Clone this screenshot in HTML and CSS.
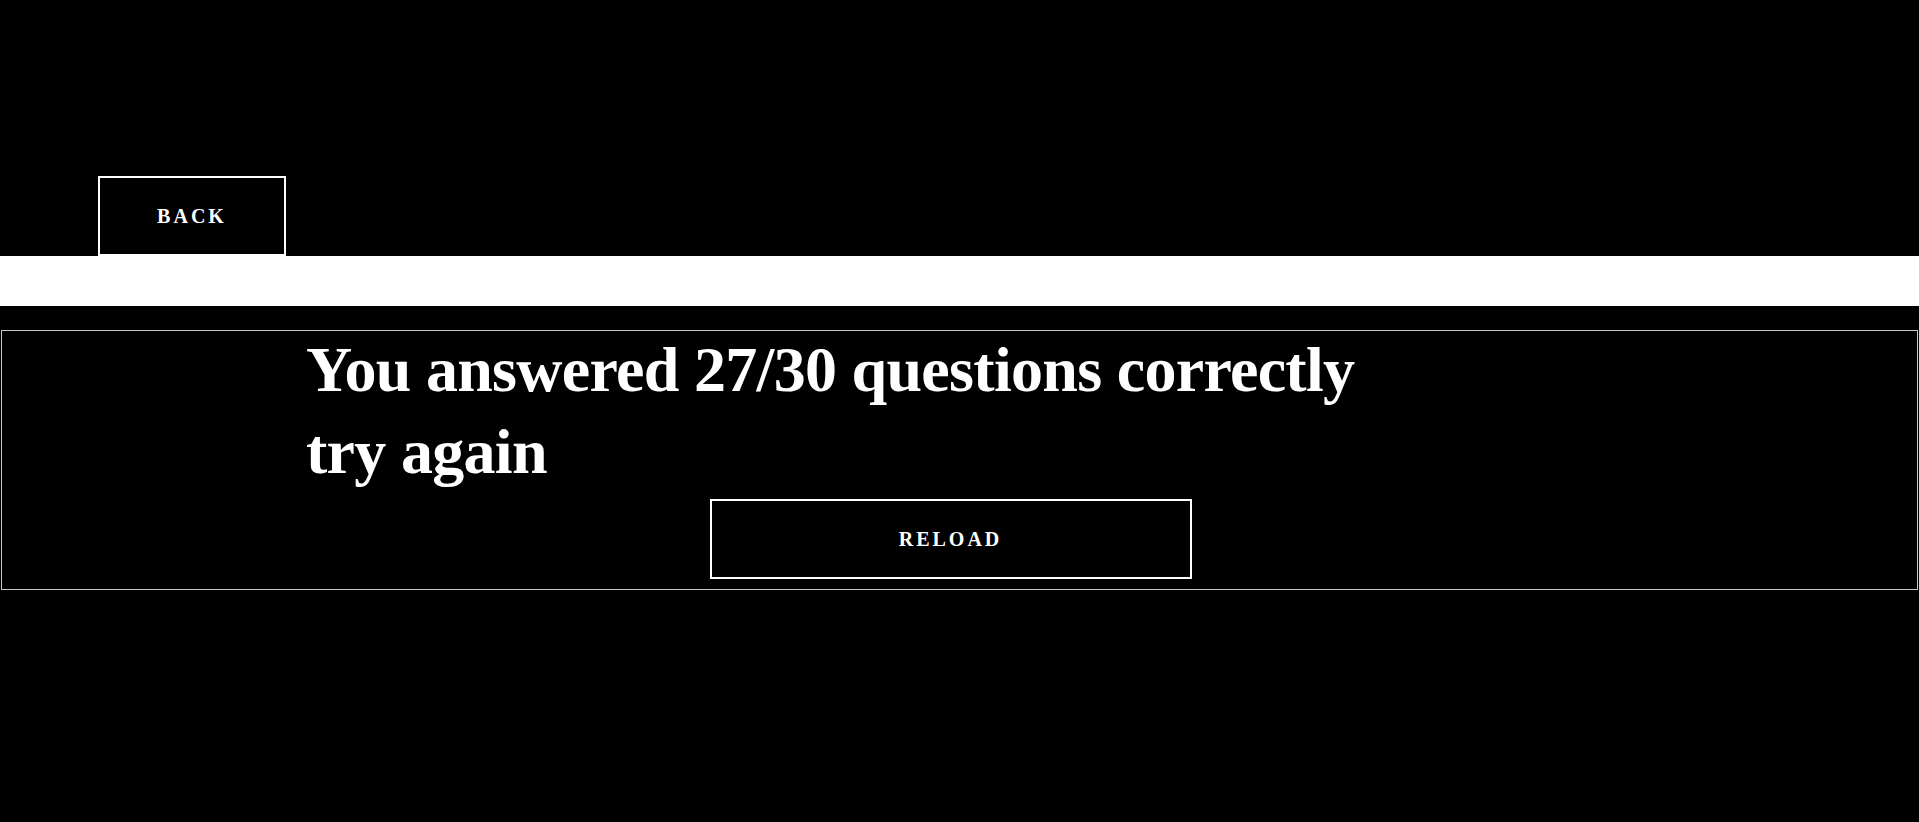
FILE: index.html
```html
<!DOCTYPE html>
<html lang="en">
<head>
<meta charset="utf-8">
<title>Quiz result</title>
<link rel="stylesheet" href="styles.css">
</head>
<body>
<header class="top">
  <button class="btn btn-back">BACK</button>
</header>
<div class="band"></div>
<main class="result">
  <div class="result-inner">
    <h1 class="result-title">You answered 27/30 questions correctly<br>try again</h1>
    <div class="actions">
      <button class="btn btn-reload">RELOAD</button>
    </div>
  </div>
</main>
</body>
</html>
```
FILE: styles.css
```css
html, body {
  margin: 0;
  padding: 0;
  background: #000;
  color: #fff;
  font-family: "Liberation Serif", "Times New Roman", serif;
}

.top {
  display: flex;
  padding: 176px 0 0 98px;
}

.btn {
  background: #000;
  color: #fff;
  border: 2px solid #fff;
  font-family: "Liberation Serif", "Times New Roman", serif;
  font-weight: bold;
  font-size: 20px;
  letter-spacing: 3px;
  padding: 0;
  box-sizing: border-box;
  height: 80px;
}

.btn-back {
  width: 188px;
}

.band {
  height: 50px;
  background: #fff;
}

.result {
  margin: 24px 1px 0;
  border: 1px solid #c8c8c8;
}

.result-inner {
  margin-left: 304px;
  width: 1289px;
  padding-bottom: 10px;
}

.result-title {
  margin: -2px 0 0;
  font-size: 64px;
  line-height: 82px;
  font-weight: bold;
  letter-spacing: -0.7px;
}

.actions {
  display: flex;
  justify-content: center;
  margin-top: 6px;
}

.btn-reload {
  width: 482px;
}
```
